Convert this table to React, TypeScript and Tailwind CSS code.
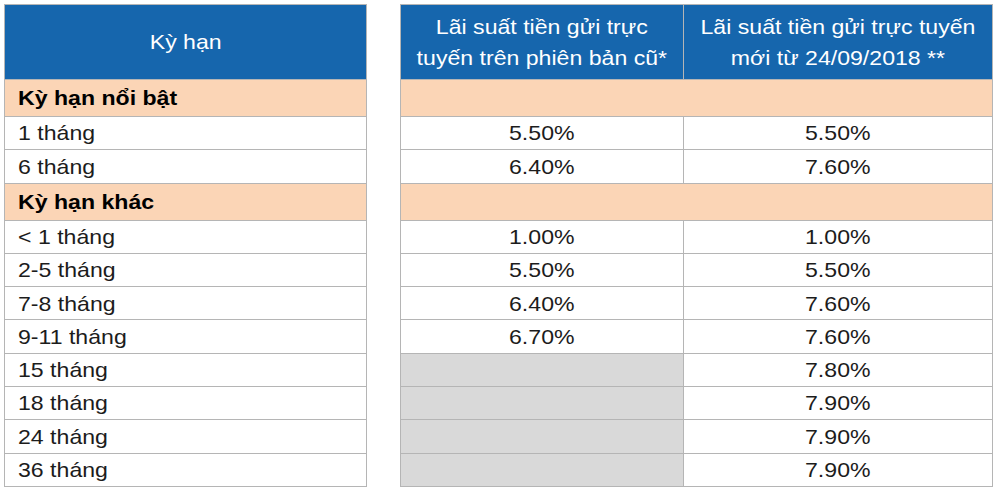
import React from "react";

type Row = {
  label: string;
  oldRate?: string;
  newRate?: string;
  kind: "section" | "row";
};

const rows: Row[] = [
  { label: "Kỳ hạn nổi bật", kind: "section" },
  { label: "1 tháng", oldRate: "5.50%", newRate: "5.50%", kind: "row" },
  { label: "6 tháng", oldRate: "6.40%", newRate: "7.60%", kind: "row" },
  { label: "Kỳ hạn khác", kind: "section" },
  { label: "< 1 tháng", oldRate: "1.00%", newRate: "1.00%", kind: "row" },
  { label: "2-5 tháng", oldRate: "5.50%", newRate: "5.50%", kind: "row" },
  { label: "7-8 tháng", oldRate: "6.40%", newRate: "7.60%", kind: "row" },
  { label: "9-11 tháng", oldRate: "6.70%", newRate: "7.60%", kind: "row" },
  { label: "15 tháng", newRate: "7.80%", kind: "row" },
  { label: "18 tháng", newRate: "7.90%", kind: "row" },
  { label: "24 tháng", newRate: "7.90%", kind: "row" },
  { label: "36 tháng", newRate: "7.90%", kind: "row" },
];

const font = { fontFamily: '"Liberation Sans", Arial, sans-serif' };

// text in the shot is a bit wider than plain Arial, stretch it slightly
const Wide = ({ children, left }: { children: React.ReactNode; left?: boolean }) => (
  <span className={`inline-block scale-x-[1.1] ${left ? "origin-left" : "origin-center"}`}>
    {children}
  </span>
);

const rowHeight = (kind: Row["kind"]) => (kind === "section" ? "h-[37px]" : "h-[33.3px]");

export default function App() {
  return (
    <div className="w-[1000px] h-[494px] bg-white flex items-start gap-[33px] pl-[4px] pt-[4px]" style={font}>
      {/* Left table: terms */}
      <div className="w-[363px] border border-[#b5b5b5] flex flex-col">
        <div className="h-[74px] bg-[#1666ad] flex items-center justify-center text-white text-[21px]">
          <Wide>Kỳ hạn</Wide>
        </div>
        {rows.map((r) => (
          <div
            key={r.label}
            className={`${rowHeight(r.kind)} border-t border-[#b5b5b5] flex items-center pl-[13px] text-[21px] ${
              r.kind === "section" ? "bg-[#fbd5b6] font-bold text-black" : "bg-white text-[#1c1c1c]"
            }`}
          >
            <Wide left>{r.label}</Wide>
          </div>
        ))}
      </div>

      {/* Right table: rates */}
      <div className="w-[593px] border border-[#b5b5b5] flex flex-col">
        <div className="h-[74px] bg-[#1666ad] grid grid-cols-[282px_1fr] text-white text-[21px] leading-[31px]">
          <div className="flex items-center justify-center text-center">
            <Wide>
              Lãi suất tiền gửi trực
              <br />
              tuyến trên phiên bản cũ*
            </Wide>
          </div>
          <div className="flex items-center justify-center text-center border-l border-[#b5b5b5]">
            <Wide>
              Lãi suất tiền gửi trực tuyến
              <br />
              mới từ 24/09/2018 **
            </Wide>
          </div>
        </div>
        {rows.map((r) =>
          r.kind === "section" ? (
            <div key={r.label} className={`${rowHeight(r.kind)} border-t border-[#b5b5b5] bg-[#fbd5b6]`} />
          ) : (
            <div
              key={r.label}
              className={`${rowHeight(r.kind)} border-t border-[#b5b5b5] grid grid-cols-[282px_1fr] text-[21px] text-[#1c1c1c]`}
            >
              <div className={`flex items-center justify-center ${r.oldRate ? "bg-white" : "bg-[#d9d9d9]"}`}>
                {r.oldRate && <Wide>{r.oldRate}</Wide>}
              </div>
              <div className="flex items-center justify-center border-l border-[#b5b5b5] bg-white">
                <Wide>{r.newRate}</Wide>
              </div>
            </div>
          )
        )}
      </div>
    </div>
  );
}
